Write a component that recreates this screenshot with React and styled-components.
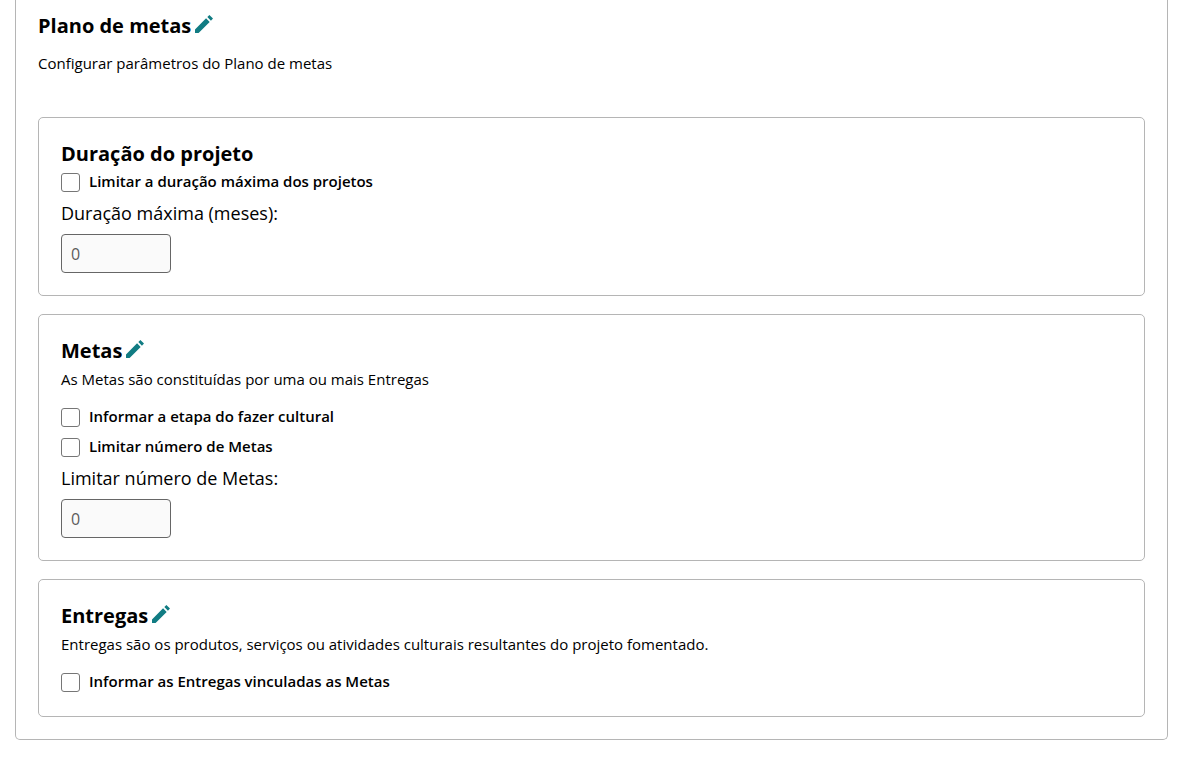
import React, { useId } from "react";
import styled, { createGlobalStyle } from "styled-components";

const GlobalStyle = createGlobalStyle`
  *, *::before, *::after { box-sizing: border-box; }
  body {
    margin: 0;
    background: #fff;
    color: #000;
    font-family: "Open Sans", "Noto Sans", sans-serif;
    font-size: 16px;
  }
`;

const Panel = styled.main`
  margin: 0 12px 18px 15px;
  padding: 12px 22px 22px;
  border: 1px solid #b5b5b5;
  border-top: 0;
  border-radius: 0 0 5px 5px;
`;

const PanelHeader = styled.header`
  display: flex;
  flex-direction: column;
  gap: 11px;
  margin-bottom: 42px;
`;

const Cards = styled.div`
  display: flex;
  flex-direction: column;
  gap: 18px;
`;

const Card = styled.section`
  padding: 22px;
  border: 1px solid #b5b5b5;
  border-radius: 5px;
`;

const TitleRow = styled.div`
  display: flex;
  align-items: center;
  gap: 4px;
`;

const Title = styled.h2`
  margin: 0;
  font-size: 20px;
  line-height: 28px;
  font-weight: 700;
`;

const EditButton = styled.button`
  display: flex;
  padding: 0;
  margin-bottom: 4px;
  border: 0;
  background: none;
  color: #117c83;
  cursor: pointer;
`;

const Description = styled.p`
  margin: 0;
  font-size: 15px;
  line-height: 24px;
`;

const CardDescription = styled(Description)`
  margin: 2px 0 12px;
`;

const Options = styled.div`
  display: flex;
  flex-direction: column;
  gap: 4px;
`;

const Option = styled.label`
  display: flex;
  align-items: center;
  gap: 9px;
  font-size: 15px;
  line-height: 26px;
  font-weight: 600;
`;

const Checkbox = styled.input`
  appearance: none;
  width: 19px;
  height: 19px;
  margin: 2px 0 0;
  border: 1px solid #767676;
  border-radius: 3px;
  background: #fff;

  &:checked {
    background: #117c83;
  }
`;

const Field = styled.div`
  display: flex;
  flex-direction: column;
  align-items: flex-start;
  gap: 7px;
  margin-top: 5px;
`;

const FieldLabel = styled.label`
  font-size: 18px;
  line-height: 28px;
`;

const NumberInput = styled.input`
  width: 110px;
  height: 39px;
  padding: 0 9px;
  border: 1px solid #666;
  border-radius: 4px;
  background: #fafafa;
  color: #5c5c5c;
  font: inherit;
`;

function Edit({ label }) {
  return (
    <EditButton type="button" aria-label={label}>
      <svg width="18" height="18" viewBox="0 0 20 20" fill="currentColor" aria-hidden="true">
        <path d="M12.3 3.7l4 4L4 20H0v-4L12.3 3.7zm1.4-1.4L16 0l4 4-2.3 2.3-4-4z" />
      </svg>
    </EditButton>
  );
}

function Heading({ children, editable }) {
  return (
    <TitleRow>
      <Title>{children}</Title>
      {editable && <Edit label={`Editar ${children}`} />}
    </TitleRow>
  );
}

function CheckOption({ children }) {
  return (
    <Option>
      <Checkbox type="checkbox" />
      <span>{children}</span>
    </Option>
  );
}

function NumberField({ label }) {
  const id = useId();
  return (
    <Field>
      <FieldLabel htmlFor={id}>{label}</FieldLabel>
      <NumberInput id={id} type="number" defaultValue={0} disabled />
    </Field>
  );
}

export default function App() {
  return (
    <>
      <GlobalStyle />
      <Panel>
        <PanelHeader>
          <Heading editable>Plano de metas</Heading>
          <Description>Configurar parâmetros do Plano de metas</Description>
        </PanelHeader>
        <Cards>
          <Card>
            <Heading>Duração do projeto</Heading>
            <Options>
              <CheckOption>Limitar a duração máxima dos projetos</CheckOption>
            </Options>
            <NumberField label="Duração máxima (meses):" />
          </Card>
          <Card>
            <Heading editable>Metas</Heading>
            <CardDescription>As Metas são constituídas por uma ou mais Entregas</CardDescription>
            <Options>
              <CheckOption>Informar a etapa do fazer cultural</CheckOption>
              <CheckOption>Limitar número de Metas</CheckOption>
            </Options>
            <NumberField label="Limitar número de Metas:" />
          </Card>
          <Card>
            <Heading editable>Entregas</Heading>
            <CardDescription>
              Entregas são os produtos, serviços ou atividades culturais resultantes do projeto fomentado.
            </CardDescription>
            <Options>
              <CheckOption>Informar as Entregas vinculadas as Metas</CheckOption>
            </Options>
          </Card>
        </Cards>
      </Panel>
    </>
  );
}
